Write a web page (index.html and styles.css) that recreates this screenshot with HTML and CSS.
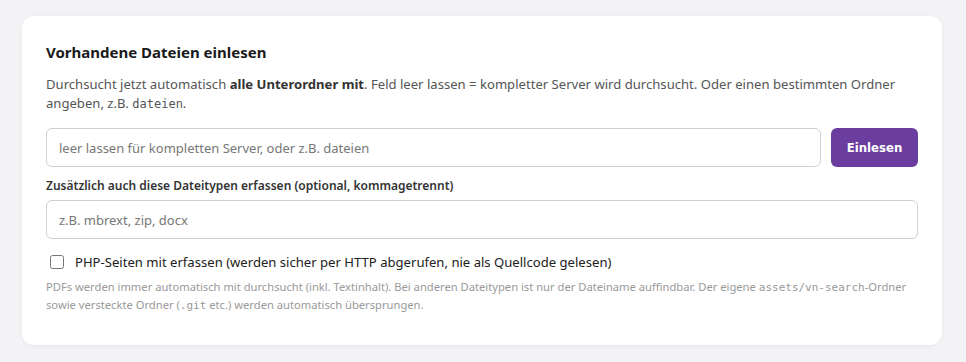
FILE: index.html
```html
<!DOCTYPE html>
<html lang="de">
<head>
    <meta charset="UTF-8">
    <meta name="viewport" content="width=device-width, initial-scale=1.0">
    <title>Dateien einlesen</title>
    <link rel="stylesheet" href="styles.css">
</head>
<body>
    <div class="card">
        <h3>Vorhandene Dateien einlesen</h3>
        <p class="intro">Durchsucht jetzt automatisch <strong>alle Unterordner mit</strong>. Feld leer lassen = kompletter Server wird durchsucht. Oder einen bestimmten Ordner angeben, z.B. <code>dateien</code>.</p>

        <div class="row">
            <input type="text" class="field" placeholder="leer lassen für kompletten Server, oder z.B. dateien">
            <button class="btn">Einlesen</button>
        </div>

        <label class="field-label" for="types">Zusätzlich auch diese Dateitypen erfassen (optional, kommagetrennt)</label>
        <input type="text" id="types" class="field" placeholder="z.B. mbrext, zip, docx">

        <label class="check">
            <input type="checkbox">
            <span>PHP-Seiten mit erfassen (werden sicher per HTTP abgerufen, nie als Quellcode gelesen)</span>
        </label>

        <p class="hint">PDFs werden immer automatisch mit durchsucht (inkl. Textinhalt). Bei anderen Dateitypen ist nur der Dateiname auffindbar. Der eigene <span class="nowrap"><code>assets/vn-search</code>-Ordner</span> sowie versteckte Ordner (<code>.git</code> etc.) werden automatisch übersprungen.</p>
    </div>
</body>
</html>
```

FILE: styles.css
```css
body {
    font-family: "Noto Sans", "Open Sans", Arial, sans-serif;
    margin: 0;
    padding: 16px 24px 17px 22px;
    background-color: #f3f3f5;
    color: #222;
}

.card {
    background-color: #fff;
    border-radius: 12px;
    box-shadow: 0 1px 4px rgba(0, 0, 0, 0.05);
    padding: 26px 24px 20px 24px;
    height: 329px;
    box-sizing: border-box;
}

h3 {
    font-size: 15px;
    font-weight: 700;
    color: #1a1a1a;
    margin: 0 0 13px 0;
    line-height: 20px;
}

.intro {
    font-size: 13.1px;
    line-height: 19px;
    color: #555;
    margin: 0 0 14px 0;
}

.intro strong {
    color: #333;
}

code {
    font-family: "DejaVu Sans Mono", "Liberation Mono", monospace;
    font-size: 12px;
}

.row {
    display: flex;
    gap: 10px;
    margin-bottom: 10px;
}

.field {
    display: block;
    width: 100%;
    box-sizing: border-box;
    height: 39px;
    padding: 0 12px;
    border: 1px solid #d0d0d0;
    border-radius: 6px;
    font-family: inherit;
    font-size: 13px;
    color: #222;
}

.field::placeholder {
    color: #777;
}

.btn {
    flex: 0 0 87px;
    height: 39px;
    border: none;
    border-radius: 6px;
    background-color: #6a3d9e;
    color: #fff;
    font-family: "DejaVu Sans Condensed", "DejaVu Sans", sans-serif;
    font-weight: bold;
    font-size: 13px;
    cursor: pointer;
}

.field-label {
    display: block;
    font-size: 12px;
    font-weight: 600;
    color: #333;
    margin-bottom: 5px;
    line-height: 18px;
}

.check {
    display: flex;
    align-items: center;
    gap: 11px;
    margin: 13px 0 6px 4px;
    font-size: 13.1px;
    color: #222;
    line-height: 20px;
}

.check input {
    width: 14px;
    height: 14px;
    margin: 0;
}

.hint {
    font-size: 11.2px;
    line-height: 17px;
    color: #999;
    margin: 0;
}

.hint code {
    font-size: 11px;
    color: #999;
}

.nowrap {
    white-space: nowrap;
}
```
